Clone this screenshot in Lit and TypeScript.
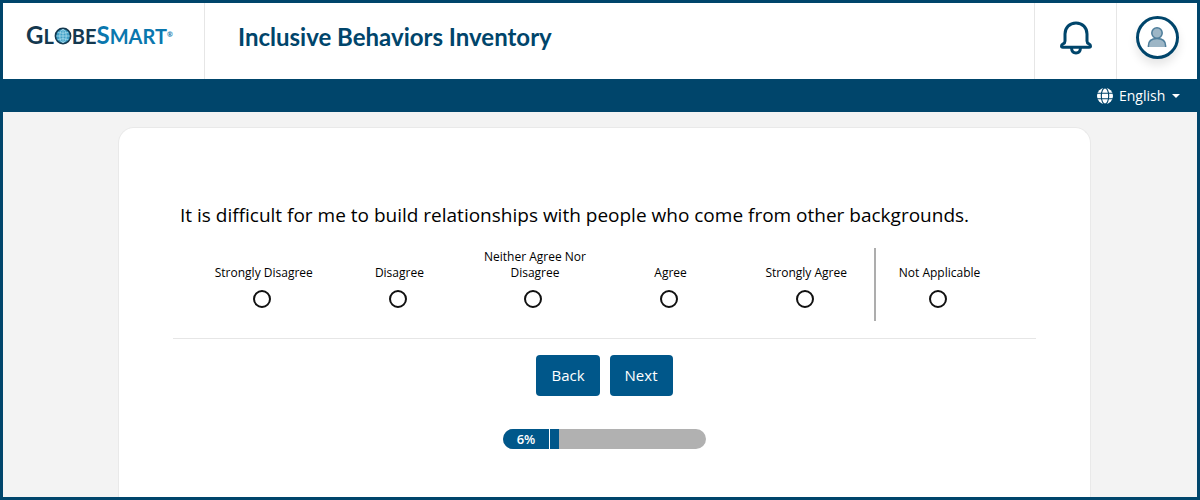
import { LitElement, html, css, svg } from "lit";
import { customElement, state } from "lit/decorators.js";
import { styleMap } from "lit/directives/style-map.js";

const SCALE = [
  "Strongly Disagree",
  "Disagree",
  "Neither Agree Nor Disagree",
  "Agree",
  "Strongly Agree",
];

const orbLines = svg`
  <g fill="none" stroke="#a9dcec" stroke-width="0.8">
    <ellipse cx="9" cy="9" rx="3.2" ry="6.6"></ellipse>
    <path d="M9 2.4v13.2M2.4 9h13.2M3.8 5.5q5.2 1.6 10.4 0M3.8 12.5q5.2-1.6 10.4 0"></path>
  </g>
`;

@customElement("app-header")
class AppHeader extends LitElement {
  static styles = css`
    :host {
      display: block;
      color: #00456b;
    }
    .bar {
      display: flex;
      align-items: stretch;
      height: 76px;
      background: #fff;
    }
    .brand {
      box-sizing: border-box;
      width: 202px;
      padding: 19px 0 0 23px;
      border-right: 1px solid #e6e6e6;
    }
    .logo {
      display: flex;
      align-items: baseline;
      font: 700 20px/26px Lato, sans-serif;
      color: #14384f;
      text-decoration: none;
    }
    .cap {
      font-size: 24px;
    }
    .blue {
      color: #0a77ae;
    }
    .orb {
      width: 18px;
      height: 18px;
      align-self: flex-start;
      margin-top: 5px;
    }
    .reg {
      align-self: flex-start;
      font-size: 7px;
      line-height: 24px;
      color: #0a77ae;
    }
    .title {
      flex: 1;
      margin: 0;
      padding: 18px 0 0 33px;
      font: 700 24px/32px Lato, sans-serif;
    }
    .cell {
      display: flex;
      justify-content: center;
      box-sizing: border-box;
      width: 82px;
      padding: 0;
      border: 0;
      border-left: 1px solid #e6e6e6;
      background: none;
      color: inherit;
      cursor: pointer;
    }
    .account {
      width: 81px;
    }
    .bell {
      width: 34px;
      height: 36px;
      margin-top: 17px;
    }
    .avatar {
      box-sizing: border-box;
      display: flex;
      justify-content: center;
      align-items: center;
      width: 43px;
      height: 43px;
      margin-top: 13px;
      border: 3px solid #00456b;
      border-radius: 50%;
      box-shadow: 0 6px 10px rgba(0, 0, 0, 0.1);
    }
    .person {
      width: 20px;
      height: 22px;
    }
    .strip {
      display: flex;
      justify-content: flex-end;
      align-items: center;
      height: 33px;
      padding-right: 17px;
      background: #00456b;
      color: #fff;
    }
    .language {
      display: flex;
      align-items: center;
      gap: 6px;
    }
    .globe {
      width: 16px;
      height: 16px;
    }
    .select {
      appearance: none;
      border: 0;
      padding: 0;
      margin: 0;
      background: none;
      color: inherit;
      font: 14px/20px "Open Sans", sans-serif;
    }
    .caret {
      width: 8px;
      height: 4px;
    }
  `;

  render() {
    return html`
      <header class="bar">
        <div class="brand">
          <a class="logo" href="#" aria-label="GlobeSmart">
            <span class="cap">G</span><span>L</span>
            <svg class="orb" viewBox="0 0 18 18" aria-hidden="true">
              <circle cx="9" cy="9" r="7.6" fill="#3f9fc6" stroke="#14384f" stroke-width="1.6"></circle>
              ${orbLines}
            </svg>
            <span>BE</span><span class="cap blue">S</span><span class="blue">MART</span>
            <span class="reg">®</span>
          </a>
        </div>
        <h1 class="title">Inclusive Behaviors Inventory</h1>
        <button class="cell" type="button" aria-label="Notifications">
          <svg class="bell" viewBox="0 0 34 36" fill="none" stroke="currentColor" stroke-width="3" stroke-linejoin="round">
            <path d="M17 3C10.500 3 6 7.600 6 14v7c0 1.700-.6 2.300-1.900 2.900-1.100.5-1.600 1.200-1.600 2.100 0 .9.500 1.300 1.400 1.300h26.200c.9 0 1.400-.4 1.400-1.300 0-.9-.5-1.600-1.600-2.100C28.600 23.300 28 22.700 28 21v-7C28 7.600 23.500 3 17 3z"></path>
            <path d="M12.500 28c.2 3.300 1.900 5 4.500 5s4.300-1.700 4.500-5"></path>
          </svg>
        </button>
        <button class="cell account" type="button" aria-label="Account">
          <span class="avatar">
            <svg class="person" viewBox="0 0 20 22" fill="#9db6c6">
              <path d="M1.400 20v-1.300c0-4.300 3-7.300 8.600-7.300s8.600 3 8.600 7.300V20z"></path>
              <path d="M1.400 20v-1.300c0-4.300 3-7.300 8.600-7.300s8.600 3 8.600 7.300V20" fill="none" stroke="#4d7d9a" stroke-width="1.500"></path>
              <circle cx="10" cy="6" r="5.200" stroke="#4d7d9a" stroke-width="1.500"></circle>
            </svg>
          </span>
        </button>
      </header>
      <div class="strip">
        <label class="language">
          <svg class="globe" viewBox="0 0 16 16" aria-hidden="true">
            <circle cx="8" cy="8" r="8" fill="#fff"></circle>
            <g fill="none" stroke="#00456b" stroke-width="1.100">
              <ellipse cx="8" cy="8" rx="3.700" ry="8"></ellipse>
              <path d="M0 5.300h16M0 10.700h16"></path>
            </g>
          </svg>
          <select class="select" aria-label="Language">
            <option>English</option>
          </select>
          <svg class="caret" viewBox="0 0 8 4" aria-hidden="true"><path d="M0 0h8L4 4z" fill="#fff"></path></svg>
        </label>
      </div>
    `;
  }
}

@customElement("survey-question")
class SurveyQuestion extends LitElement {
  static styles = css`
    :host {
      display: block;
    }
    .question {
      border: 0;
      margin: 0;
      padding: 0;
      min-width: 0;
    }
    .text {
      padding: 0 7px;
      font-size: 19px;
      line-height: 26px;
    }
    .options {
      display: flex;
      margin: 20px 33px 0 23px;
    }
    .scale {
      flex: 1;
      display: grid;
      grid-template-columns: repeat(5, 1fr);
    }
    .option {
      display: flex;
      flex-direction: column;
      justify-content: flex-end;
      align-items: center;
      box-sizing: border-box;
      height: 73px;
      padding-bottom: 13px;
      gap: 9px;
      font-size: 12px;
      line-height: 16px;
      text-align: center;
    }
    .caption {
      max-width: 112px;
    }
    .separate {
      width: 129px;
      border-left: 2px solid #adadad;
    }
    .radio {
      appearance: none;
      box-sizing: border-box;
      width: 18px;
      height: 18px;
      margin: 0 3px 0 0;
      border: 2px solid #111;
      border-radius: 50%;
      background: #fff;
    }
    .radio:checked {
      background: radial-gradient(#00578a 45%, #fff 50%);
    }
  `;

  @state() private answer = "";

  private option(label: string, extra = "") {
    return html`
      <label class="option ${extra}">
        <span class="caption">${label}</span>
        <input
          class="radio"
          type="radio"
          name="answer"
          .checked=${this.answer === label}
          @change=${() => (this.answer = label)}
        />
      </label>
    `;
  }

  render() {
    return html`
      <fieldset class="question">
        <legend class="text">
          It is difficult for me to build relationships with people who come from other backgrounds.
        </legend>
        <div class="options">
          <div class="scale">${SCALE.map((label) => this.option(label))}</div>
          ${this.option("Not Applicable", "separate")}
        </div>
      </fieldset>
    `;
  }
}

@customElement("survey-progress")
class SurveyProgress extends LitElement {
  static styles = css`
    :host {
      display: block;
    }
    .progress {
      display: flex;
      width: 203px;
      height: 20px;
      margin: 0 auto;
      border-radius: 10px;
      overflow: hidden;
      background: #b1b1b1;
      color: #fff;
      font-size: 13px;
      font-weight: 600;
      line-height: 20px;
      text-align: center;
    }
    .value {
      width: 46px;
      background: #00578a;
      border-right: 1px solid #fff;
    }
    .track {
      flex: 1;
    }
    .fill {
      height: 100%;
      background: #00578a;
    }
  `;

  @state() private percent = 6;

  render() {
    return html`
      <div class="progress" role="progressbar" aria-label="Survey progress" aria-valuenow=${this.percent} aria-valuemin="0" aria-valuemax="100">
        <div class="value">${this.percent}%</div>
        <div class="track">
          <div class="fill" style=${styleMap({ width: `${this.percent}%` })}></div>
        </div>
      </div>
    `;
  }
}

@customElement("app-root")
class AppRoot extends LitElement {
  static styles = css`
    :host {
      display: flex;
      flex-direction: column;
      box-sizing: border-box;
      min-height: 100vh;
      border: 3px solid #00456b;
      background: #f3f3f3;
      color: #000;
      font-family: "Open Sans", sans-serif;
    }
    .page {
      flex: 1;
      display: flex;
      padding: 15px 106px 0 115px;
    }
    .card {
      flex: 1;
      box-sizing: border-box;
      padding: 74px 54px 40px;
      border: 1px solid #e9e9e9;
      border-bottom: 0;
      border-radius: 16px 16px 0 0;
      background: #fff;
    }
    .actions {
      display: flex;
      justify-content: center;
      gap: 10px;
      margin: 17px 0 33px;
      padding-top: 16px;
      border-top: 1px solid #e6e6e6;
    }
    .button {
      height: 41px;
      padding: 0 15px 2px;
      border: 0;
      border-radius: 4px;
      background: #00578a;
      color: #fff;
      font: 500 15px/20px "Open Sans", sans-serif;
      cursor: pointer;
    }
  `;

  render() {
    return html`
      <app-header></app-header>
      <main class="page">
        <section class="card">
          <survey-question></survey-question>
          <div class="actions">
            <button class="button" type="button">Back</button>
            <button class="button" type="button">Next</button>
          </div>
          <survey-progress></survey-progress>
        </section>
      </main>
    `;
  }
}
